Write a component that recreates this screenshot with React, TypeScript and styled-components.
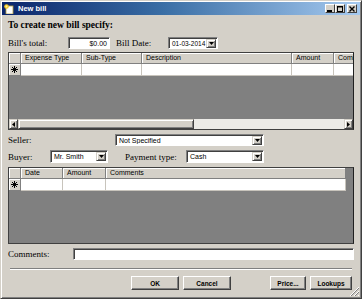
import styled, { createGlobalStyle } from "styled-components";

const GlobalStyle = createGlobalStyle`
  html, body {
    margin: 0;
    padding: 0;
    background: #d4d0c8;
  }
  body {
    width: 362px;
    height: 299px;
    overflow: hidden;
  }
`;

// Outer dialog frame, classic raised window border.
const Window = styled.div`
  box-sizing: border-box;
  position: relative;
  width: 362px;
  height: 299px;
  display: flex;
  flex-direction: column;
  background: #d4d0c8;
  border: 1px solid;
  border-color: #d4d0c8 #404040 #404040 #d4d0c8;
  box-shadow: inset 1px 1px 0 #fff, inset -1px -1px 0 #808080;
  font-family: "Liberation Sans", Arial, sans-serif;
  color: #000;
`;

const TitleBar = styled.div`
  height: 13px;
  margin: 1px 1px 0;
  display: flex;
  align-items: center;
  padding: 0 2px;
  background: linear-gradient(90deg, #0a246a 0%, #3a6ea5 45%, #a6caf0 100%);
`;

const TitleText = styled.span`
  margin-left: 4px;
  color: #fff;
  font-weight: bold;
  font-size: 7.5px;
  flex: 1;
`;

const CaptionButtons = styled.div`
  display: flex;
  margin-right: 1px;
`;

const CaptionButton = styled.div<{ $gap?: boolean }>`
  box-sizing: border-box;
  width: 10px;
  height: 9px;
  margin-left: ${(p) => (p.$gap ? "2px" : "0")};
  background: #d4d0c8;
  border: 1px solid;
  border-color: #fff #404040 #404040 #fff;
  display: flex;
  align-items: center;
  justify-content: center;
`;

const Body = styled.div`
  flex: 1;
  display: flex;
  flex-direction: column;
  padding: 0 7px;
`;

const Heading = styled.div`
  height: 20px;
  line-height: 20px;
  font-family: "Liberation Serif", "Times New Roman", serif;
  font-weight: bold;
  font-size: 9.5px;
`;

const Row = styled.div<{ $mt: number; $h?: number }>`
  display: flex;
  align-items: center;
  margin-top: ${(p) => p.$mt}px;
  height: ${(p) => p.$h ?? 12}px;
`;

const Label = styled.span<{ $w?: number; $ml?: number }>`
  font-family: "Liberation Serif", "Times New Roman", serif;
  font-size: 9px;
  width: ${(p) => (p.$w ? `${p.$w}px` : "auto")};
  margin-left: ${(p) => p.$ml ?? 0}px;
  flex-shrink: 0;
  white-space: nowrap;
`;

const Field = styled.div<{ $w?: number; $right?: boolean }>`
  box-sizing: border-box;
  height: 100%;
  width: ${(p) => (p.$w ? `${p.$w}px` : "auto")};
  flex: ${(p) => (p.$w ? "0 0 auto" : "1")};
  background: #fff;
  border: 1px solid;
  border-color: #808080 #fff #fff #808080;
  box-shadow: inset 1px 1px 0 #404040;
  display: flex;
  align-items: center;
  justify-content: ${(p) => (p.$right ? "flex-end" : "flex-start")};
  padding: 0 2px;
  font-size: 7px;
  overflow: hidden;
  white-space: nowrap;
`;

const ComboText = styled.span<{ $small?: boolean }>`
  flex: 1;
  padding-left: 1px;
  font-size: ${(p) => (p.$small ? "6.5px" : "7px")};
  overflow: hidden;
`;

const DropButton = styled.div`
  box-sizing: border-box;
  width: 10px;
  height: 9px;
  flex-shrink: 0;
  margin-right: -1px;
  background: #d4d0c8;
  border: 1px solid;
  border-color: #d4d0c8 #404040 #404040 #d4d0c8;
  box-shadow: inset 1px 1px 0 #fff, inset -1px -1px 0 #808080;
  display: flex;
  align-items: center;
  justify-content: center;
`;

const Grid = styled.div<{ $mt: number; $h: number }>`
  box-sizing: border-box;
  margin-top: ${(p) => p.$mt}px;
  height: ${(p) => p.$h}px;
  border: 1px solid #404040;
  border-right-color: #202020;
  background: #808080;
  display: flex;
  flex-direction: column;
  overflow: hidden;
`;

const GridRow = styled.div<{ $h: number }>`
  display: flex;
  height: ${(p) => p.$h}px;
  flex-shrink: 0;
`;

const HeadCell = styled.div<{ $w: number }>`
  box-sizing: border-box;
  width: ${(p) => p.$w}px;
  flex-shrink: 0;
  background: #d4d0c8;
  border-right: 1px solid #808080;
  border-bottom: 1px solid #808080;
  box-shadow: inset 1px 1px 0 #fff;
  font-size: 7px;
  line-height: 9px;
  padding-left: 4px;
  white-space: nowrap;
  overflow: hidden;
`;

const RowHead = styled.div`
  box-sizing: border-box;
  width: 12px;
  flex-shrink: 0;
  background: #d4d0c8;
  border-right: 1px solid #808080;
  border-bottom: 1px solid #808080;
  box-shadow: inset 1px 1px 0 #fff;
  display: flex;
  align-items: center;
  justify-content: center;
`;

const Cell = styled.div<{ $w: number }>`
  box-sizing: border-box;
  width: ${(p) => p.$w}px;
  flex-shrink: 0;
  background: #fff;
  border-right: 1px solid #c8c4bc;
  border-bottom: 1px solid #c8c4bc;
`;

const GridFill = styled.div`
  flex: 1;
`;

const HScroll = styled.div`
  display: flex;
  height: 10px;
  flex-shrink: 0;
  background: #ecebe7;
`;

const ScrollArrow = styled.div`
  box-sizing: border-box;
  width: 9px;
  height: 10px;
  background: #d4d0c8;
  border: 1px solid;
  border-color: #d4d0c8 #404040 #404040 #d4d0c8;
  box-shadow: inset 1px 1px 0 #fff, inset -1px -1px 0 #808080;
  display: flex;
  align-items: center;
  justify-content: center;
`;

const Thumb = styled.div<{ $w: number }>`
  box-sizing: border-box;
  width: ${(p) => p.$w}px;
  height: 10px;
  background: #d4d0c8;
  border: 1px solid;
  border-color: #d4d0c8 #404040 #404040 #d4d0c8;
  box-shadow: inset 1px 1px 0 #fff, inset -1px -1px 0 #808080;
`;

const Track = styled.div`
  flex: 1;
`;

const Separator = styled.div`
  margin: 8px 2px 0;
  height: 0;
  border-top: 1px solid #808080;
  border-bottom: 1px solid #fff;
`;

const Footer = styled.div`
  display: flex;
  margin-top: 6px;
  height: 14px;
`;

const Button = styled.div<{ $w: number; $ml: number }>`
  box-sizing: border-box;
  width: ${(p) => p.$w}px;
  margin-left: ${(p) => p.$ml}px;
  height: 14px;
  background: #d4d0c8;
  border: 1px solid;
  border-color: #fff #404040 #404040 #fff;
  box-shadow: inset -1px -1px 0 #808080;
  display: flex;
  align-items: center;
  justify-content: center;
  font-size: 6.5px;
  font-weight: bold;
`;

const Grip = styled.svg`
  position: absolute;
  right: 1px;
  bottom: 1px;
`;

const Arrow = ({ dir }: { dir: "down" | "left" | "right" }) => {
  const pts =
    dir === "down" ? "0,0 5,0 2.5,3" : dir === "left" ? "3,0 3,5 0,2.5" : "0,0 0,5 3,2.5";
  const w = dir === "down" ? 5 : 3;
  const h = dir === "down" ? 3 : 5;
  return (
    <svg width={w} height={h} viewBox={`0 0 ${w} ${h}`}>
      <polygon points={pts} fill="#000" />
    </svg>
  );
};

const Combo = ({ w, text, small }: { w: number; text: string; small?: boolean }) => (
  <Field $w={w}>
    <ComboText $small={small}>{text}</ComboText>
    <DropButton>
      <Arrow dir="down" />
    </DropButton>
  </Field>
);

const Star = () => (
  <svg width="7" height="7" viewBox="0 0 7 7">
    <g stroke="#000" strokeWidth="1">
      <line x1="3.5" y1="0" x2="3.5" y2="7" />
      <line x1="0" y1="3.5" x2="7" y2="3.5" />
      <line x1="1" y1="1" x2="6" y2="6" />
      <line x1="6" y1="1" x2="1" y2="6" />
    </g>
  </svg>
);

const WinIcon = () => (
  <svg width="10" height="10" viewBox="0 0 10 10">
    <rect x="2" y="2" width="7" height="8" fill="#fff" stroke="#b8a040" strokeWidth="0.8" />
    <circle cx="2.5" cy="2.5" r="2.3" fill="#f7c824" />
    <circle cx="2.5" cy="2.5" r="1" fill="#fff6a0" />
  </svg>
);

export default function App() {
  return (
    <>
      <GlobalStyle />
      <Window>
        <TitleBar>
          <WinIcon />
          <TitleText>New bill</TitleText>
          <CaptionButtons>
            <CaptionButton>
              <svg width="6" height="6" viewBox="0 0 6 6">
                <rect x="0" y="4" width="5" height="2" fill="#000" />
              </svg>
            </CaptionButton>
            <CaptionButton>
              <svg width="6" height="6" viewBox="0 0 6 6">
                <rect x="0.5" y="0.5" width="5" height="5" fill="none" stroke="#000" />
                <rect x="0" y="0" width="6" height="1.5" fill="#000" />
              </svg>
            </CaptionButton>
            <CaptionButton $gap>
              <svg width="6" height="6" viewBox="0 0 6 6">
                <path d="M0.5 0.5 L5.5 5.5 M5.5 0.5 L0.5 5.5" stroke="#000" strokeWidth="1.4" />
              </svg>
            </CaptionButton>
          </CaptionButtons>
        </TitleBar>

        <Body>
          <Heading>To create new bill specify:</Heading>

          <Row $mt={2}>
            <Label $w={60}>Bill's total:</Label>
            <Field $w={42} $right>
              $0.00
            </Field>
            <Label $w={52} $ml={6}>
              Bill Date:
            </Label>
            <Combo w={50} text="01-03-2014" small />
          </Row>

          <Grid $mt={3} $h={78}>
            <GridRow $h={11}>
              <RowHead />
              <HeadCell $w={61}>Expense Type</HeadCell>
              <HeadCell $w={60}>Sub-Type</HeadCell>
              <HeadCell $w={150}>Description</HeadCell>
              <HeadCell $w={42}>Amount</HeadCell>
              <HeadCell $w={60}>Comments</HeadCell>
            </GridRow>
            <GridRow $h={12}>
              <RowHead>
                <Star />
              </RowHead>
              <Cell $w={61} />
              <Cell $w={60} />
              <Cell $w={150} />
              <Cell $w={42} />
              <Cell $w={60} />
            </GridRow>
            <GridFill />
            <HScroll>
              <ScrollArrow>
                <Arrow dir="left" />
              </ScrollArrow>
              <Thumb $w={176} />
              <Track />
              <ScrollArrow>
                <Arrow dir="right" />
              </ScrollArrow>
            </HScroll>
          </Grid>

          <Row $mt={4}>
            <Label $w={107}>Seller:</Label>
            <Combo w={149} text="Not Specified" />
          </Row>

          <Row $mt={4} $h={13}>
            <Label $w={42}>Buyer:</Label>
            <Combo w={58} text="Mr. Smith" />
            <Label $w={61} $ml={17}>
              Payment type:
            </Label>
            <Combo w={78} text="Cash" />
          </Row>

          <Grid $mt={4} $h={77}>
            <GridRow $h={11}>
              <RowHead />
              <HeadCell $w={42}>Date</HeadCell>
              <HeadCell $w={43}>Amount</HeadCell>
              <HeadCell $w={240}>Comments</HeadCell>
            </GridRow>
            <GridRow $h={12}>
              <RowHead>
                <Star />
              </RowHead>
              <Cell $w={42} />
              <Cell $w={43} />
              <Cell $w={240} />
            </GridRow>
            <GridFill />
          </Grid>

          <Row $mt={4}>
            <Label $w={65}>Comments:</Label>
            <Field />
          </Row>

          <Separator />

          <Footer>
            <Button $w={48} $ml={123}>
              OK
            </Button>
            <Button $w={48} $ml={4}>
              Cancel
            </Button>
            <Button $w={36} $ml={39}>
              Price...
            </Button>
            <Button $w={42} $ml={4}>
              Lookups
            </Button>
          </Footer>
        </Body>

        <Grip width="11" height="11" viewBox="0 0 11 11">
          <g strokeWidth="1">
            <path d="M10 1 L1 10 M10 5 L5 10 M10 9 L9 10" stroke="#fff" />
            <path d="M10 2 L2 10 M10 6 L6 10" stroke="#808080" />
          </g>
        </Grip>
      </Window>
    </>
  );
}
